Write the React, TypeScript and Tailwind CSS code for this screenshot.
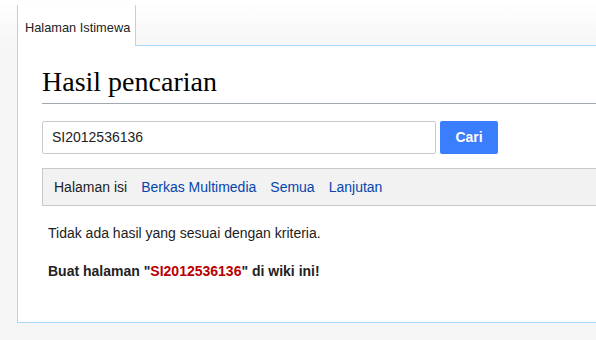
export default function App() {
  return (
    <div className="w-[596px] h-[340px] overflow-hidden bg-[#f6f6f6] font-['Liberation_Sans',Arial,sans-serif] text-[#222]">
      {/* Header strip with the page tab */}
      <div className="h-[46px] flex items-end bg-gradient-to-b from-white to-[#f6f6f6] pl-[17px]">
        <div className="h-[41px] w-[119px] bg-white border-l border-r border-[#a7d7f9] flex items-end pb-[9px] pl-[7px] text-[12.8px] text-[#222]">
          Halaman Istimewa
        </div>
        <div className="flex-1 h-full border-b border-[#a7d7f9]" />
      </div>

      {/* Content */}
      <div className="ml-[17px] w-[640px] h-[277px] bg-white border-l border-b border-[#a7d7f9] pl-[24px] pt-[18px]">
        <h1 className="font-['Liberation_Serif',Georgia,serif] text-[28px] leading-[36px] text-black border-b border-[#a2a9b1] pb-[3px]">
          Hasil pencarian
        </h1>

        <div className="flex gap-[4px] mt-[17px]">
          <div className="w-[394px] h-[33px] border border-[#c8ccd1] rounded-[2px] flex items-center pl-[9px] text-[14px] text-[#222]">
            SI2012536136
          </div>
          <button className="w-[58px] h-[33px] rounded-[2px] bg-[#3a7efd] text-white font-bold text-[14px]">
            Cari
          </button>
        </div>

        <div className="mt-[14px] h-[38px] bg-[#f2f2f2] border border-[#c8c8c8] flex items-center pl-[11px] gap-[14px] text-[14px]">
          <span className="text-[#222]">Halaman isi</span>
          <span className="text-[#0645ad]">Berkas Multimedia</span>
          <span className="text-[#0645ad]">Semua</span>
          <span className="text-[#0645ad]">Lanjutan</span>
        </div>

        <div className="pl-[6px] text-[14px]">
          <p className="mt-[17px] leading-[20px]">Tidak ada hasil yang sesuai dengan kriteria.</p>
          <p className="mt-[18px] leading-[20px] font-bold">
            Buat halaman "<span className="text-[#ba0000]">SI2012536136</span>" di wiki ini!
          </p>
        </div>
      </div>
    </div>
  );
}
